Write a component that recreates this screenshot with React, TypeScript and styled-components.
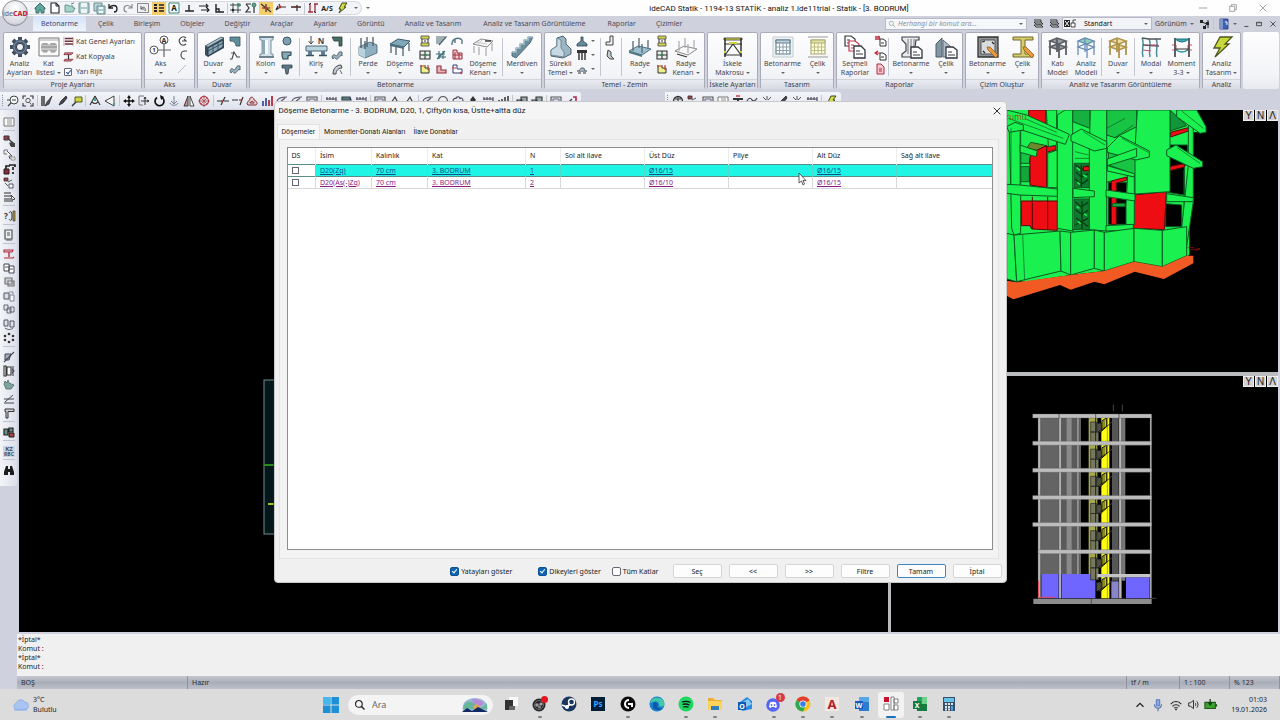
import React from "react";
import styled, { createGlobalStyle } from "styled-components";

/* ---------- icon data: [path, fill, stroke, stroke width] ---------- */
type Shape = [string, string?, string?, number?];
/* lettering inside an icon: [text, centre x, baseline, size, colour] */
type Letter = [string, number, number, number, string];

const c = (x: number, y: number, r: number) =>
  `M${x - r} ${y}a${r} ${r} 0 1 0 ${2 * r} 0a${r} ${r} 0 1 0 ${-2 * r} 0`;

const INK = "#33363f";
const STEEL = "#5f7f93";
const PALE = "#b9d3df";
const N = "none";

const page: Shape[] = [["M2 1h9l5 5v12h-14z", "#fff", INK, 1.3], ["M11 1v5h5M5 9h8M5 12h8", N, INK, 1.2]];
const docAt = (x: number, y: number, col = INK): Shape[] => [
  [`M${x} ${y}h6l4 3v7h-10z`, "#fff", col, 1.2],
  [`M${x + 2} ${y + 4}h3M${x + 2} ${y + 7}h6`, N, col, 1],
];
const frame3d = (col: string, top: string): Shape[] => [
  ["M4 6L11 3L20 6L13 9Z", top, col, 1.6],
  ["M4 12L11 9L20 12L13 15Z", top, col, 1.6],
  ["M4 6V20M13 9V23M20 6V20M11 3V17", N, col, 1.8],
];

const letters: Record<string, Letter[]> = {
  axis: [["A", 15, 8, 7, "#333"], ["1", 5, 17, 6, "#333"]],
  beam: [["N", 17, 9, 8, "#3d4a55"]],
  letterA: [["A", 6, 9, 8, "#222"]],
  as: [["A/S", 6, 9, 7, "#222"]],
  help: [["?", 3, 9, 8, "#333"]],
  kzty: [["KZ", 6, 6, 6, "#3b4f66"], ["RBC", 6, 11, 5, "#3b4f66"]],
  ps: [["Ps", 8, 11, 8, "#31a8ff"]],
  acad: [["A", 8, 12.5, 13, "#b3202c"]],
  word: [["W", 5, 11.5, 7, "#fff"]],
  excel: [["X", 5, 11.5, 7, "#fff"]],
  outlook: [["O", 5, 12.5, 7, "#fff"]],
};

const big: Record<string, Shape[]> = {
  gear: [
    ["M12 2V22M2 12H22M5 5L19 19M19 5L5 19", N, "#414d5e", 4],
    [c(12, 12, 7.5), "#4f5f73"], [c(12, 12, 6), N, "#7d91a5", 1], [c(12, 12, 3.6), "#eef2f6", "#2f3947", 1],
  ],
  list: [
    ["M2 3h20v18h-20z", "#fafafa", "#777", 1], ["M2 5h20", N, "#aaa", 1],
    ["M5 9h6v7h-6zM13 9h6v7h-6zM7 8v10M9 8v10M15 8v10M17 8v10M4 12h16", N, "#777", 0.8],
  ],
  axis: [
    ["M15 9V22M8 15H22", N, "#666", 1.2], [c(15, 5, 4), "#fff", "#444", 0.9], [c(5, 15, 4), "#fff", "#444", 0.9],
  ],
  wall: [
    ["M3 11L19 2L22 3V13L6 22L3 20Z", "#3c4f5e"], ["M6 13L21 5V12L6 21Z", "#89a6b5", "#2d3c48", 1],
    ["M6 16L21 8M11 10V18M16 8V15", N, "#3c5363", 1], ["M3 11L19 2L22 3L6 12Z", "#a9c3d0", "#33444f", 0.6],
  ],
  column: [
    ["M6 2h13v3h-2v14h2v3h-13v-3h2V5h-2z", "#cfe0e8", "#7b909d", 1], ["M8 5h3v14h-3z", "#8fa6b3"], ["M11 5h3v14h-3z", "#f6fafc"],
    ["M5 2h15M5 22h15", N, "#5c707e", 1.4],
  ],
  beam: [
    ["M2 11h21v5h-21z", PALE, "#4f6878", 1], ["M4 16h4v4h-4zM17 16h4v4h-4z", STEEL], ["M2 20.500h8M15 20.500h8", N, "#3d5363", 1.5],
    ["M7 1V9M7 9l-2.500-3M7 9l2.500-3", N, "#444", 1],
  ],
  shear: [
    ["M3 12L14 7L21 10V18L9 23L3 20Z", "#8fb0c0", "#47606e", 0.8], ["M3 12L9 14V23L3 20Z", "#b8d2de"],
    ["M5 3V13M11 2V12M17 2V11M9 6V14", N, "#4b5b66", 1.3],
  ],
  slab: [
    ["M2 9L10 4L22 6L16 12Z", "#7fa9b9", "#3f5b69", 1], ["M2 9L16 12V14L2 11Z", "#4e7080"],
    ["M3 11V18M8 12V20M15 13V21M21 8V16", N, "#5d6c76", 1.4],
  ],
  slabEdge: [
    ["M2 9L10 4L22 6L16 12Z", "#f8f8f8", "#888", 1], ["M4 7l12 2M12 4l-6 6", N, "#bbb", 0.8],
    ["M3 11V18M8 12V20M15 13V21M21 8V16", N, "#aaa", 1.2], ["M14 6h6", N, "#333", 1.4],
  ],
  stairs: [
    ["M2 21L2 17H6V13H10V9H14V5H18V2H23L20 8L6 23Z", "#6c8f9e", "#3e5865", 0.8],
    ["M2 17H6V13H10V9H14V5H18V2H23", N, "#a9c5d1", 1.5],
  ],
  strip: [
    ["M8 3L14 1L17 4V9L22 14V19L14 23L2 21V15L8 11Z", "#9db6c3", "#4d626f", 1],
    ["M8 3L12 5V13L15 17V22L2 20V15L8 11Z", "#c7dae3", "#5d7482", 0.7],
  ],
  raft: [
    ["M1 16L10 11L23 14L14 20Z", "#9cc0d0", "#4f7282", 1], ["M1 16L14 20V22L1 18Z", "#547787"],
    ["M5 6V16M11 3V13M14 9V18M20 5V14", N, "#566a76", 1.3],
  ],
  raftEdge: [
    ["M1 16L10 11L23 14L14 20Z", "#f8f8f8", "#888", 1], ["M5 6V16M11 3V13M14 9V18M20 5V14", N, "#aaa", 1.2], ["M3 19l10 3", N, "#333", 1.2],
  ],
  scaffold: [
    ["M3 3h18v2h-18z", "#dfe04a", "#333", 0.8], ["M3 9h18M3 20h18", N, "#333", 1.2], ["M4 3V22M20 3V22", N, "#333", 1.5],
    ["M4 20L12 9L20 20", N, "#333", 1.2], ["M3 17h2M19 17h2M8 8h8", N, "#cfd33a", 2],
  ],
  calc: [
    ["M2 2h20v20h-20z", "#eef1f4", "#c3ccd3", 1], ["M5 5h14v14h-14z", "#fff", "#5e7a88", 1.1], ["M5 5h14v3h-14z", "#bed3dd", "#5e7a88", 1],
    ["M5 12h14M5 15.500h14M8.500 8v11M12 8v11M15.500 8v11", N, "#8aa2ae", 1],
  ],
  calcSteel: [
    ["M2 2h20M2 22h20", N, "#999", 1], ["M5 5h14v14h-14z", "#fdfde0", "#a9a972", 1.1], ["M5 5h14v3h-14z", "#e3e3a2", "#a9a972", 1],
    ["M5 12h14M5 15.500h14M8.500 8v11M12 8v11M15.500 8v11", N, "#bdbd82", 1],
  ],
  reports: [...docAt(2, 1), ...docAt(6, 6, "#c8354f"), ["M11 11h7l4 4v8h-11z", "#fff", INK, 1.3], ["M13 16h4M13 19h7", N, INK, 1]],
  colReport: [
    ["M3 2h17v3h-3l-1 7v7h4v3h-17v-3l4-3V9L3 5z", "#e8ebee", "#3c434a", 1.2], ["M9 4v15M12 4v15M15 4v8", N, "#777", 1],
    ["M12 12h7l4 3v8h-11z", "#fff", INK, 1.3], ["M14 17h4M14 20h7", N, INK, 1],
  ],
  steelReport: [
    ["M2 22V9L8 3V22Z", "#8395a2", "#4d5c67", 1], ["M9 22V5L16 11V22Z", "#aebdc7", "#5b6b76", 1],
    ["M12 12h7l4 3v8h-11z", "#fff", INK, 1.3], ["M14 17h4M14 20h7", N, INK, 1],
  ],
  drawConc: [
    ["M2 2h20v20h-20z", "#8e9296", "#333", 1.3], ["M5 5h14v14h-14z", "#d9dcde", "#555", 1], ["M6 7l3-1M16 7l2 2M7 16l2 2", N, "#222", 1.2],
    ["M11 12L14 12L22 20L20 23L12 15Z", "#e79b3c", "#8b5512", 0.7],
  ],
  drawSteel: [
    ["M2 2h20v3h-8v14h8v3h-20v-3h8V5h-8z", "#d8cd6c", "#6f6828", 1], ["M12 12L15 12L23 20L21 23L13 15Z", "#e79b3c", "#8b5512", 0.7],
  ],
  solid: frame3d("#5b5f65", "#9a9fa5"),
  model: [["M4 6L11 3L20 6L13 9Z", "#8ed0c0", "#5b87a8", 1.2], ["M4 12L11 9L20 12L13 15Z", N, "#5b87a8", 1.2], ["M4 6V20M13 9V23M20 6V20M11 3V17", N, "#6a8cbc", 1.3]],
  wallFrame: frame3d("#b1944c", "#f0dfa4"),
  modal: [
    ["M3 3C6 8 2 14 4 22M10 4C13 9 9 15 11 22M17 4C20 9 16 15 18 22", N, "#4a8f9a", 1.5],
    ["M3 3L10 4L22 4M4 10L20 11", N, "#4f555c", 1.4], ["M4 15l8 1M11 10h8", N, "#d0506e", 1.2],
  ],
  moment: [
    ["M5 3V22M19 3V22", N, "#383c44", 1.6], ["M5 4H19Q12 10 5 4Z", "#3fb0b8", "#1d6d77", 1], ["M5 14Q12 20 19 14", N, "#2a98a4", 1.5],
    ["M2 10h4v5h-4M22 10h-4v5h4", N, "#b03a4a", 0.8], ["M5 14h14", N, "#333", 1],
  ],
  bolt: [["M10 2H22L15 9H19L5 22L10 13H4Z", "#c9d93b", "#4c5420", 1.3]],
};

const small: Record<string, Shape[]> = {
  home: [["M1 6L6 1L11 6V7H10V11H7V8H5V11H2V7H1Z", "#62a79c", "#2d6863", 0.9]],
  newDoc: [["M2 1h5l3 3v7h-8z", "#fff", "#222", 1.1], ["M7 1v3h3", N, "#222", 1]],
  open: [["M1 10V3h3l1 1h4v2h2l-2 4z", "#a5d3c6", "#68998f", 1], ["M7 2l3-1", N, "#48857c", 1]],
  save: [["M1 1h10v10h-10z", "#a9c8ca", "#6a9196", 1], ["M3 1h6v4h-6zM3 7h6v4h-6z", "#eef6f5"]],
  saveAll: [["M1 1h8v8h-8z", "#bcd2d5", "#6a9196", 1], ["M4 4h8v8h-8z", "#a9c8ca", "#6a9196", 1], ["M6 5h4v2h-4zM6 9h4v2h-4z", "#f2f8f8"]],
  undo: [["M2 2V6H6M2 6C4 3 10 2 10 7C10 9 9 10 7 10", N, "#222", 1.3]],
  redo: [["M10 2V6H6M10 6C8 3 2 2 2 7C2 9 3 10 5 10", N, "#888", 1.2]],
  undoBox: [["M0.500 1.500h11v9h-11z", "#eee", "#888", 1], ["M4 4V7H7M4 7C6 4 9 5 8 9", N, "#555", 1]],
  tree: [["M1 2h3v2h-3zM1 5h3v2h-3zM1 8h3v2h-3z", "#222"], ["M6 3h5M6 6h5M6 9h5", N, "#222", 1.4]],
  letterA: [["M1 1h10v10h-10z", "#f6fbf8", "#3f8372", 1]],
  perp: [["M6 3V9M2 9H11", N, "#222", 1.4]],
  parallel: [["M1 4H9M3 8H11M8 2l2 2l-2 2M9 6l2 2l-2 2", N, "#222", 1.1]],
  corner: [["M3 2V10H11M3 7h3v3", N, "#222", 1.4]],
  gridPts: [["M3 1V11M8 1V11M0 3H11M0 8H11", N, "#3a4a45", 1], [c(9, 3, 1.8), "#3f8f6d"], [c(3, 8, 1.2), "#222"]],
  sigma: [["M1 2H6M1 2L4 6L1 10H6M9 5V11", N, "#333", 1.2], [c(9, 3, 2), "#5aa58a", "#27624c", 0.7]],
  snap: [["M1 2L11 10M6 2V10M2 6H10", N, "#333", 1.2], [c(6, 6, 1.6), "#c33"]],
  axisX: [["M1 8L5 5H11M5 5L4 2M1 8l2-4", N, "#333", 1.2], [c(5, 5, 1.4), "#b33"]],
  axisY: [["M1 5H11M7 3V9", N, "#333", 1.3], ["M3 5H6", N, "#a33", 1.6]],
  dims: [["M3 1V10M8 2V11M1 10H6M7 2h4", N, "#a02a3c", 1.3], ["M2 3l2-2M7 9l2 2", N, "#333", 1]],
  as: [],
  flash: [["M6 1H11L8 5H10L3 11L5 7H3Z", "#d5df3a", "#3d451c", 1]],
  floors: [["M2 2h9v1.500h-9zM2 5h9v1.500h-9zM2 8h9v1.500h-9z", "#6a3340"], ["M1 1v10M11 1v10", N, "#b66", 0.6]],
  copyFloor: [["M2 2h9l-2 2h-8zM2 9h9l-2 2h-8z", "#d7818b", "#7a2733", 0.8], ["M6 4V9", N, "#333", 1.3]],
  arcUp: [["M10 3A4 4 0 1 0 10 9M6 6h4l-2-2", N, "#444", 1.1]],
  arcC: [["M9 2A4 4 0 1 0 9 10M9 2h2", N, "#444", 1.1]],
  dash: [["M2 10L10 2", N, "#bbb", 1]],
  wallArc: [["M1 2h10v9h-4c0-3-2-5-6-5z", "#5e8e9c", "#33525e", 0.8]],
  poly: [["M1 10H3L5 3L8 8H11", N, "#444", 1.1], ["M2 4h3", N, "#444", 0.8]],
  wave: [["M1 8C3 2 5 10 7 5C8 2 10 3 11 3V7C9 5 8 10 6 10C4 11 4 6 2 10Z", "#9ab4c0", "#3b4f5a", 0.8]],
  circle: [[c(6, 6, 4), "#7fa0b2", "#3b5564", 1]],
  blob: [["M1 3h9v3l-3 1v3h-5l-1-3z", "#86a9b7", "#2e4653", 1.1]],
  tee: [["M1 2h10v3h-3l-1 6h-2l-1-6h-3z", "#5c7888", "#33444f", 0.8]],
  angle: [["M1 2h10v9h-3V6h-5z", "#486c62", "#2b3f3c", 0.8]],
  arcBeam: [["M2 11C2 5 6 2 10 2L11 5C8 5 5 7 5 11Z", "#c2cbd0", "#444", 1], ["M9 7l2 4", N, "#444", 0.8]],
  yellowI: [["M2 1h8v3h-8zM2 8h8v3h-8z", "#d6d84a", "#555", 0.9], ["M3 4v4M9 4v4M5 6h2", N, "#333", 1]],
  window: [["M1 2h10v8h-10zM6 2v8M1 6h10", "#e8f0ea", "#333", 1.1], ["M4 6h4", N, "#3b8e55", 1.2]],
  yellowL: [["M2 2V10H10V5H6V2", "#eef08a", "#333", 1], ["M1 3h4M9 2v5", N, "#cc3b3b", 1.2]],
  hatch: [["M1 2h10L4 10M1 4h8M1 6h6M1 8h5", N, "#48656c", 1.2]],
  hash: [["M2 10L10 2M1 5h9M3 8h8M4 2v8M8 2v8", N, "#376a72", 1.1]],
  redL: [["M2 3V10H11V7H6V3Z", "#e8b4b8", "#8c2b38", 1.1]],
  arcTable: [["M1 8C2 3 8 2 11 5M1 8V10M4 5V8M11 5V9", N, "#567885", 1.4]],
  redGrid: [["M2 1V10H11V4H6V1ZM4 3V10M8 4V10M2 6H11", "#f0d2d4", "#a12a3c", 1]],
  plainL: [["M2 2V10H11V6H6V2Z", "#fff", "#333a7a", 1], ["M1 5h4M9 9l2 2", N, "#c33", 1.2]],
  foot: [["M5 2h2v4l4 3v2h-10V9l4-3z", "#63899a", "#2e4553", 0.8]],
  piles: [["M1 1h10v3h-10z", "#333"], ["M3 4v7M6 4v7M9 4v7", N, "#444", 1.6]],
  ties: [["M1 8h10M2 10h3M7 10h3", N, "#333", 1.2], ["M3 8L5 5H8L9 8", "#9bb3bf", "#4d6270", 0.8]],
  lShape: [["M6 1h3v9h-7V7h4z", "#eee", "#444", 1]],
  hook: [["M4 1l3 2v4l3 3h-4l-3-3z", "#c3ced4", "#444", 1]],
  rep1: [["M1 2h5M1 4h5M4 1l2 2", N, "#c22a3f", 1.4], ["M6 4h3l3 2v5h-6z", "#fff", "#333", 1], ["M7 8h3", N, "#333", 1]],
  rep2: [["M1 4h5M4 2l-3 2l3 2", N, "#c22a3f", 1.2], ["M6 4h3l3 2v5h-6z", "#fff", "#333", 1], ["M7 8h3", N, "#333", 1]],
  rep3: [["M3 1h4l3 3v7h-7z", "#f5c7cd", "#b02a40", 1], ["M5 6h3M5 8h3", N, "#b02a40", 1]],
  zoomWin: [[c(7, 5, 4), "#f4f7f8", "#444", 1], ["M4 8L1 11M5 5h4M0 5h3", N, "#444", 1.2]],
  zoomAll: [["M1 4V1H4M8 1H11V4M11 8V11H8M4 11H1V8", N, "#333", 1.1], [c(6, 5.5, 2.2), N, "#555", 1], ["M7.500 7.500l2 2", N, "#555", 1]],
  brush: [["M1 1v10M3 1v10", N, "#333", 1.4], ["M11 1L6 7L4 11L8 9Z", "#556", "#222", 0.7]],
  pen: [["M10 1L5 6L3 10L7 8L11 3Z", "#445", "#222", 0.8]],
  tag: [["M4 2h7v5h-7z", "#cdd545", "#555a1c", 1], ["M1 11L5 7", N, "#333", 1.5]],
  compass: [["M6 1L1 10M6 1L11 10M3 7C5 9 7 9 9 7", N, "#333", 1.1], ["M5 3h2v3h-2z", "#4ba093"]],
  arrowL: [["M1 6L10 1V11Z", "#f3f3f3", "#444", 1], [c(10, 9, 1.2), "#4ba093"]],
  move: [["M6 0L8 3H4ZM6 12L8 9H4ZM0 6L3 4V8ZM12 6L9 4V8Z", "#111"], ["M6 2V10M2 6H10", N, "#111", 1.4]],
  moveCopy: [["M1 1h5M1 1v9h4", N, "#777", 1], ["M7 2V10M3 6H11M7 2l-1 2M7 2l1 2M11 6l-2-1M11 6l-2 1", N, "#333", 1]],
  rotate: [["M8 2A4.500 4.500 0 1 1 4 2.500", N, "#111", 1.7], ["M7 0L11 2L8 5Z", "#111"]],
  anchor: [["M6 1V9M3 6L6 9L9 6M2 8C3 11 9 11 10 8", N, "#7c8494", 1]],
  mirror: [["M5 1V11H1Z", "#c98b90", "#333", 0.9], ["M7 1V11H11Z", "#fff", "#333", 0.9]],
  target: [[c(6, 6, 4.5), "#f7dada", "#b03040", 1.1], ["M6 0V12M0 6H12M3 3l6 6M9 3L3 9", N, "#8d4a55", 0.7]],
  trim: [["M0 6H5M7 6H12M4 10L8 2", N, "#333", 1.2], [c(5, 6, 1), "#b33"]],
  extend: [["M0 5H6M8 10L11 2", N, "#333", 1.2], ["M7 5h3", N, "#b33", 1.3]],
  offset: [["M1 9C1 6 4 6 4 3C6 1 8 3 8 5C11 6 12 9 10 10H2Z", "#e6c8cc", "#7c3540", 1], ["M4 8C4 6 8 6 8 8Z", N, "#7c3540", 1]],
  bars: [["M2 11V6M5 11V3", N, "#3b55a5", 1.8], ["M8 11V5M11 11V1", N, "#b02a3c", 1.8]],
  curve: [["M1 6C2 3 5 2 11 2M3 8L9 3", N, "#556", 1.1]],
  box: [["M1 2h10v9h-10z", "#dfe6e8", "#555", 1.1], ["M3 4h6v4h-6z", N, "#668", 1]],
  dots: [["M1 4h10M2 2v3M5 2v3M8 2v3M11 2v4", N, "#445", 1.1]],
  block: [["M2 2h8l1 3h-9z", "#5f7f88", "#2d3f46", 1.2]],
  wedge: [["M2 8L6 2L9 8", N, "#333", 1.1]],
  ring: [[c(6, 6, 4.5), N, "#555", 1.1]],
  cloudLine: [["M1 6C1 3 4 3 4 4C4 1 8 1 8 4C9 2 11 3 11 6", N, "#445", 1.1]],
  tip: [["M3 5L6 1L9 5L6 8Z", "#333"]],
  chart: [["M2 8V5M5 8V4M8 8V2M11 8V1", N, "#333", 1.5]],
  panels: [["M1 5h5v6h-5zM5 2h6v8h-6z", "#9aa7ad", "#333", 1.1]],
  redTick: [["M2 9h4M9 2h3v6", N, "#b02a50", 1.6], ["M5 7l3-3", N, "#335", 1.2]],
  globe: [[c(6, 6, 4.5), "#dfe3e6", "#333", 1.3], ["M3 4h6M6 2v8", N, "#333", 1]],
  spark: [["M6 1V5M2 2L5 5M10 2L7 5M2 7h8", N, "#556", 1]],
  tilde: [["M1 6C3 2 5 3 6 5C8 7 10 5 11 3", N, "#445", 1.2]],
  flag: [["M1 3h10v2h-10zM5 5h2v6h-2z", "#333"], ["M4 1h4", N, "#b33", 1.4]],
  listBox: [["M1 2h10v8h-10z", "#fafafa", "#777", 1], ["M4 4h5M4 6h5M4 8h5", N, "#888", 0.9]],
  selRed: [["M1 1h5v4h-5z", "#a4434f", "#333", 1], ["M4 3L10 8L7 8L8 11", "#fff", "#333", 1.2], ["M8 8h4v4h-4z", "#444"]],
  selGray: [["M1 1h4M1 1v4M1 5h3", N, "#777", 1], ["M4 2L9 7L6 7L7 10", "#fff", "#555", 1], ["M8 8h4v3h-4z", "#e5e5e5", "#888", 0.8]],
  lock: [["M1 6h5v5h-5z", "#8d2c38", "#222", 1], ["M3 6V3h4M6 2h6v2M10 4v3M10 9v2", N, "#222", 1.7]],
  pins: [["M1 1h4v3h-4z", "#a4434f", "#333", 0.8], ["M5 5l4-2M6 7h4v4h-4zM2 6l3 3", "#fff", "#556", 1]],
  tableSel: [["M1 2h7M1 5h7M1 8h7M1 10h9", N, "#333", 1.2], ["M8 4L12 8L9 9Z", "#fff", "#333", 0.9]],
  help: [["M6 3C8 0 9 2 9 6C9 10 8 12 6 9", N, "#333", 1], ["M10 1h2v10h-2z", "#b9a23f", "#333", 0.7]],
  sheet: [["M2 1h7v9h-7z", "#eceff1", "#555", 1.2], ["M4 4h3M4 6h3M3 11h6", N, "#555", 1]],
  plumb: [["M1 2h9l-1 2h-8zM1 10h9l1-1", "#e6c4c8", "#b0303f", 1.1], ["M6 4V9", N, "#b0303f", 1.4]],
  copy: [["M1 2h5v7h-5zM6 4h5v7h-5z", "#fff", "#445", 1], ["M2 5h3M7 7h3", N, "#445", 0.9]],
  stack: [["M2 2h7v6h-7zM5 5h6v5h-6z", "#c7ccd2", "#777", 1.2]],
  send: [["M1 3h5v6h-5z", "#d8dde3", "#556", 1], ["M7 5h4v6h-4zM6 2h4v2", "#f6f6f6", "#778", 0.9]],
  multi: [["M1 1h4v5h-4zM4 4h4v5h-4zM7 3h4v5h-4z", "#e4e8ec", "#667", 1]],
  swap: [["M1 2h4v6h-4zM7 3h4v6h-4z", "#dde2e8", "#556", 1], ["M2 10C5 12 8 12 10 10", N, "#556", 1]],
  circleDots: [[c(6, 2, 1.3), "#333"], [c(10, 4, 1.3), "#333"], [c(10, 8, 1.3), "#333"], [c(6, 10, 1.3), "#333"], [c(2, 8, 1.3), "#333"], [c(2, 4, 1.3), "#333"]],
  slashBox: [["M2 3h6l-2 6h-4z", "#9eb0b8", "#445", 1], ["M1 11L11 1", N, "#445", 1.1]],
  door: [["M1 1h2v10h-2zM4 2h4v8h-4z", "#fff", "#333", 1.1], ["M10 1v10M9 4l2 2l-2 2", N, "#445", 1.1]],
  hand: [["M1 5L2 2L4 4L5 1L6 4L11 6L8 10H3Z", "#81a39f", "#4b6b6a", 0.8]],
  slope: [["M1 6H11M1 10H11M2 9L10 2", N, "#445", 1]],
  pipe: [["M2 2h9v2.500h-6v6.500h-2v-6.500h-1z", "#d0d4d8", "#333", 1]],
  cubes: [["M1 3h4v6h-4zM6 2h4v4h-4z", "#6d8f88", "#222", 1.2], ["M6 7h5v4h-5z", "#a5453f", "#222", 1]],
  kzty: [["M0 1h12v11h-12z", "#c9d5df"]],
  binoc: [["M3 2h2v3h2V2h2l2 6v3H7V8H5v3H1V8z", "#1c1c1c"]],
  layers: [["M2 4h7l2 2h-7zM2 7h7l2 2h-7zM2 2h7v2", "#d8dadd", "#333", 1]],
  swatch: [["M0 2h6v7h-6z", "#222"], ["M1 3l4 5M5 3l-4 5", N, "#fff", 1], ["M8 5h3v4h-4v-4zM9 5V2h3", "#fff", "#333", 0.9]],
  nodes: [["M2 2h3v3h-3zM8 4h3v3h-3zM5 8h3v3h-3z", "#222"], ["M4 4l5 2l-3 3M10 2v8", N, "#222", 1]],
  book: [["M2 1h8v10h-8z", "#3c63b8", "#223a78", 0.8], ["M2 1h3v10h-3z", "#8296c8"], ["M7 4h2v3", N, "#fff", 1]],
  search: [[c(5, 5, 3.2), N, "#888", 0.9], ["M7.500 7.500L11 11", N, "#888", 1]],
  min: [["M1 6H11", N, "#888", 0.9]],
  restore: [["M2 4h6v6h-6zM4 4V2h6v6h-2", N, "#888", 0.9]],
  close: [["M2 2L10 10M10 2L2 10", N, "#888", 0.9]],
  closeDark: [["M2 2L10 10M10 2L2 10", N, "#222", 1.1]],
  restoreSm: [["M3 4h6v4h-6zM3 4.500h6", N, "#555", 1.2]],
  closeSm: [["M3 3L9 9M9 3L3 9", N, "#555", 1.2]],
  minSm: [["M4 9H9", N, "#555", 1.3]],
};

const task: Record<string, Shape[]> = {
  start: [["M0 0h7.500v7.500h-7.500zM8.500 0h7.500v7.500h-7.500zM0 8.500h7.500v7.500h-7.500zM8.500 8.500h7.500v7.500h-7.500z", "#1d8fd6"], ["M0 0h7.500v7.500h-7.500z", "#47b8ec"]],
  desk: [["M6 1h9v9h-9z", "#fafafa"], ["M2 4h8v10h-8z", "#333"], ["M6 10h6v4h-6z", "#666"]],
  obs: [[c(7, 9, 6.5), "#26282b"], [c(7, 9, 4.5), N, "#777", 0.8], [c(5, 9, 1.8), "#9a9a9a"], [c(9, 8, 1.6), "#aaa"], [c(7.5, 11, 1.6), "#888"], [c(12.5, 3.5, 3.5), "#e2161c"]],
  steam: [[c(8, 8, 7.5), "#17375e"], [c(10.5, 6, 3), N, "#fff", 1.4], [c(6, 11, 2), "#fff"], ["M1 9L6 11L9 8", N, "#fff", 1.8]],
  ps: [["M1 1h14v14h-14z", "#001e36"]],
  logi: [[c(8, 8, 7.5), "#0b0b0b"], ["M9 4A4 4 0 1 0 9 12M8 8h4v3", N, "#fff", 2]],
  edge: [[c(8, 8, 7.5), "#1681cf"], ["M1 7A7.500 7.500 0 0 1 15.500 8C15 11 12 11 10 10C11 7 8 4 4 6Z", "#40c9a5"], ["M4 7C7 5 10 8 8 10C9 13 12 13 14 12A7.500 7.500 0 0 1 4 12Z", "#0c58a6"]],
  spotify: [[c(8, 8, 7.5), "#1ed760"], ["M4 6C7 5 10 5 12.500 6.500M4.500 8.500C7 7.700 9.500 8 11.500 9M5 11C7 10.300 9 10.500 10.500 11.200", N, "#10141a", 1.3]],
  folder: [["M1 2h5l2 2h7v10h-14z", "#eeb02c"], ["M1 5h14v9h-14z", "#fbd25b"], ["M4 10h8v4h-8z", "#2f7dbd"]],
  outlook: [["M3 6L10 1L15 5V13L5 15Z", "#2a8be0"], ["M6 6L11 3L15 8L9 11Z", "#86c8f2"], ["M1 6h8v8h-8z", "#0f5ab5"]],
  discord: [[c(7, 9, 6.8), "#5865f2"], ["M4 6.500C6 5.500 8 5.500 10 6.500L11 11L9 12L8.500 11H5.500L5 12L3 11Z", "#fff"], [c(5.5, 9, 0.9), "#5865f2"], [c(8.5, 9, 0.9), "#5865f2"]],
  chrome: [[c(8, 8, 7.5), "#fbc116"], ["M8 8L1.500 4.200A7.500 7.500 0 0 1 14.500 4.200Z", "#e33b2e"], ["M8 8L1.500 4.200A7.500 7.500 0 0 0 8 15.500L11 9.500Z", "#2da94f"], [c(8, 8, 3.6), "#fff"], [c(8, 8, 2.8), "#3b7ded"]],
  acad: [["M1 1h14v14h-14z", "#f4e6e0"]],
  word: [["M5 1h10v14h-10z", "#2b7cd3"], ["M5 1h10v5h-10z", "#58a6e8"], ["M1 5h8v8h-8z", "#185abd"]],
  idecad: [["M1 1h5v5h-5z", "#c8102e"], ["M1 8h5v6h-5zM8 1h3v13h-3zM11 3h4v4h-4zM11 9h4v5h-4z", "#fff", "#777", 0.9]],
  excel: [["M5 1h10v14h-10z", "#21a366"], ["M10 1h5v7h-5z", "#6fd08c"], ["M5 8h10v7h-10z", "#177a45"], ["M1 5h8v8h-8z", "#107c41"]],
  calculator: [["M2 1h12v14h-12z", "#38506a"], ["M3 2h10v4h-10z", "#63c4e8"], ["M4 7h2v2h-2zM7 7h2v2h-2zM10 7h2v2h-2zM4 10h2v2h-2zM7 10h2v2h-2zM4 12.500h2v2h-2zM7 12.500h2v2h-2z", "#dfe8ef"], ["M10 10h2v4.500h-2z", "#4aa3e0"]],
  cloud: [["M4 13A3.500 3.500 0 0 1 4 6.500A4.500 4.500 0 0 1 12 5.500A3.800 3.800 0 0 1 12.500 13Z", "#a9c4f2", "#7fa3dd", 0.6], ["M2 13H14", N, "#8db0ea", 1.2]],
  lens: [[c(6.5, 6.5, 4.5), N, "#222", 1.5], ["M10 10L14 14", N, "#222", 1.8]],
  up: [["M4 10L8 6L12 10", N, "#222", 1.4]],
  mic: [["M6 2h4v7h-4z", "#8aa8dc", "#4a6fb8", 1], ["M4 7C4 13 12 13 12 7M8 12V15", N, "#4a6fb8", 1.2]],
  wifi: [["M2 7C5 3 11 3 14 7M4 9.500C6 7 10 7 12 9.500M6 11.500C7 10.500 9 10.500 10 11.500", N, "#222", 1.2], [c(8, 13, 1), "#222"]],
  sound: [["M2 6h2l4-3v10l-4-3h-2z", N, "#222", 1.1], ["M10 6C11 7 11 9 10 10M12 4C14 6 14 10 12 12", N, "#222", 1.1]],
  battery: [["M1 5h12v7h-12z", "#39a12c", "#235a1d", 1.2], ["M13 7h2v3h-2z", "#235a1d"], ["M7 1v6M5 5l2 3l2-3", N, "#143d10", 1.4]],
};

/* ---------- icon ---------- */
const Glyph = styled.svg<{ $size: number }>`
  width: ${(p) => p.$size}px;
  height: ${(p) => p.$size}px;
  flex: none;
  display: block;
  overflow: visible;
`;

function Icon({ set, name, size, box }: { set: Record<string, Shape[]>; name: string; size: number; box: number }) {
  return (
    <Glyph $size={size} viewBox={`0 0 ${box} ${box}`} aria-hidden="true">
      {(set[name] || page).map(([d, fill = N, stroke, sw], i) => (
        <path key={i} d={d} fill={fill} stroke={stroke} strokeWidth={sw} fillRule="evenodd" />
      ))}
      {(letters[name] || []).map(([t, x, y, fs, col]) => (
        <text key={t} x={x} y={y} fontSize={fs} fontWeight="700" textAnchor="middle" fill={col}>{t}</text>
      ))}
    </Glyph>
  );
}
const Big = ({ name }: { name: string }) => <Icon set={big} name={name} size={24} box={24} />;
const Small = ({ name, size = 12 }: { name: string; size?: number }) => <Icon set={small} name={name} size={size} box={12} />;
const Task = ({ name, size = 16 }: { name: string; size?: number }) => <Icon set={task} name={name} size={size} box={16} />;

/* ---------- base ---------- */
const Global = createGlobalStyle`
  * { box-sizing: border-box; }
  body { margin: 0; background: #cfd2de; }
  body, button, input, select { font-family: "Noto Sans", "Open Sans", sans-serif; font-size: 7px; line-height: 9px; color: #3d3f4a; }
  button { border: 0; padding: 0; background: none; }
`;

const Shell = styled.div`
  position: relative;
  display: flex;
  flex-direction: column;
  min-height: 100vh;
  overflow: hidden;
`;

const Caret = styled.span`
  width: 0;
  height: 0;
  flex: none;
  border: 2px solid transparent;
  border-top-color: #666;
  border-bottom: 0;
`;

/* ---------- title bar ---------- */
const TitleBar = styled.header`
  display: flex;
  align-items: center;
  height: 16px;
  background: #fefefe;
`;
const Orb = styled.button`
  position: absolute;
  left: 2px;
  top: 0;
  width: 26px;
  height: 26px;
  border-radius: 50%;
  border: 1px solid #8b8d96;
  background: radial-gradient(circle at 50% 30%, #fff, #d9dae0 70%, #a9abb5);
  font-size: 7px;
  font-weight: 800;
  color: #c22633;
  z-index: 2;
`;
const OrbPrefix = styled.span`
  color: #666;
  font-weight: 400;
`;
const QuickBar = styled.div`
  display: flex;
  align-items: center;
  height: 14px;
  margin-left: 20px;
  padding-left: 12px;
  border: 1px solid #d6d8df;
  border-left: 0;
  border-radius: 0 7px 7px 0;
  background: #f3f4f8;
`;
const QuickWrap = styled.div`
  display: flex;
  align-items: center;
  gap: 4px;
`;
const QuickGroup = styled.div<{ $w: number }>`
  display: flex;
  justify-content: space-around;
  width: ${(p) => p.$w}px;
  margin: 0 1px;
`;
const IconButton = styled.button<{ $on?: boolean }>`
  display: grid;
  place-items: center;
  width: 14px;
  height: 13px;
  background: ${(p) => (p.$on ? "#f5cd6c" : "none")};
`;
const CaretButton = styled(IconButton)`
  width: 11px;
`;
const VRule = styled.span<{ $h?: number }>`
  width: 1px;
  height: ${(p) => p.$h || 11}px;
  flex: none;
  background: #c3c5cf;
`;
const AppTitle = styled.h1`
  flex: 1;
  margin: 0;
  padding-right: 8px;
  font-family: Roboto, "Noto Sans", sans-serif;
  font-size: 8px;
  font-weight: 400;
  color: #111;
  text-align: center;
  white-space: nowrap;
`;
const WindowButtons = styled.div`
  display: flex;
  justify-content: flex-end;
  gap: 16px;
  padding-right: 10px;
`;

/* ---------- tab strip ---------- */
const TabStrip = styled.nav`
  display: flex;
  align-items: center;
  height: 15px;
  padding: 0 2px 0 33px;
  background: #cfd1dc;
`;
const RibbonTab = styled.button<{ $on?: boolean; $wide?: boolean }>`
  height: 15px;
  padding: 0 ${(p) => (p.$on ? 8 : p.$wide ? 12 : 10)}px;
  margin-right: ${(p) => (p.$on ? 2 : 0)}px;
  border-radius: 2px 2px 0 0;
  color: ${(p) => (p.$on ? "#3a4a78" : "#4a4c58")};
  background: ${(p) => (p.$on ? "linear-gradient(#d5e3f8, #eef3fb)" : "none")};
  white-space: nowrap;
`;
const Spacer = styled.span`
  flex: 1;
`;
const SearchBox = styled.label`
  display: flex;
  align-items: center;
  gap: 2px;
  width: 142px;
  height: 12px;
  padding: 0 3px 0 2px;
  border: 1px solid #b7bac6;
  background: #f6f7fa;
  input {
    flex: 1;
    min-width: 0;
    padding: 0;
    border: 0;
    background: none;
    font-style: italic;
    outline: 0;
  }
  input::placeholder { color: #8c8f99; }
`;
const StripTools = styled.div`
  display: flex;
  align-items: center;
  gap: 4px;
  padding: 0 2px 0 5px;
`;
const StyleBox = styled.label`
  display: flex;
  align-items: center;
  gap: 2px;
  width: 90px;
  height: 13px;
  padding: 0 3px 0 1px;
  border: 1px solid #b7bac6;
  background: #f2f3f7;
  select {
    flex: 1;
    appearance: none;
    padding: 0 6px;
    border: 0;
    background: none;
    color: #111;
    outline: 0;
  }
`;
const ViewTools = styled.div`
  display: flex;
  align-items: center;
  gap: 2px;
  width: 126px;
  justify-content: space-between;
  padding-left: 3px;
`;

/* ---------- ribbon ---------- */
const Ribbon = styled.section`
  display: flex;
  gap: 2px;
  height: 60px;
  padding: 1px 1px 2px 3px;
  background: #cfd1dc;
`;
const Group = styled.div<{ $w?: number }>`
  display: flex;
  flex-direction: column;
  flex: ${(p) => (p.$w ? `0 0 ${p.$w}px` : "1 1 0")};
  min-width: 0;
  border: 1px solid #a9acb8;
  border-width: ${(p) => (p.$w ? "1px" : "0")};
  border-radius: 2px;
  background: linear-gradient(#fdfdfe, #f3f4f7 75%, #e9eaf0);
`;
const GroupBody = styled.div`
  display: flex;
  flex: 1;
  padding-top: 2px;
`;
const Caption = styled.div`
  height: 10px;
  border-top: 1px solid #d3d5de;
  background: linear-gradient(#e9eaf1, #d8dae4);
  display: flex;
  justify-content: center;
  white-space: nowrap;
  line-height: 9px;
`;
const ToolButton = styled.button<{ $w: number }>`
  display: flex;
  flex-direction: column;
  align-items: center;
  flex: 0 0 ${(p) => p.$w}px;
  min-width: 0;
  height: 44px;
  color: #44464f;
  white-space: nowrap;
  line-height: 9px;
`;
const ToolLine = styled.span`
  display: flex;
  align-items: center;
  gap: 2px;
  height: 9px;
`;
const SmallCol = styled.div<{ $w: number }>`
  display: flex;
  flex-direction: column;
  align-items: center;
  gap: 2px;
  flex: 0 0 ${(p) => p.$w}px;
  min-width: 0;
  height: 42px;
`;
const CaretCell = styled.span`
  display: grid;
  place-items: center;
  height: 12px;
`;
const Divider = styled.span<{ $w: number }>`
  flex: 0 0 ${(p) => p.$w}px;
  display: flex;
  justify-content: center;
  padding-top: 3px;
`;
const SideList = styled.div`
  display: flex;
  flex-direction: column;
  gap: 2px;
  padding-left: 1px;
`;
const SideItem = styled.button`
  display: flex;
  align-items: center;
  gap: 2px;
  height: 13px;
  white-space: nowrap;
`;
const Tick = styled.input`
  appearance: none;
  position: relative;
  width: 8px;
  height: 8px;
  margin: 0;
  flex: none;
  border: 1px solid #667;
  border-radius: 1px;
  background: #fff;
  &:checked::after {
    content: "";
    position: absolute;
    left: 2px;
    top: 0;
    width: 2px;
    height: 4px;
    border: solid #2e4a8f;
    border-width: 0 1px 1px 0;
    transform: rotate(40deg);
  }
`;
const BlueTick = styled(Tick)`
  width: 9px;
  height: 9px;
  border-radius: 2px;
  &:checked {
    background: #1164b4;
    border-color: #0d5296;
  }
  &:checked::after { border-color: #fff; }
`;
const SideCheck = styled.label`
  display: flex;
  align-items: center;
  gap: 4px;
  height: 13px;
  padding-left: 1px;
`;

function Tool({ w, icon, a, b, caret }: { w: number; icon: string; a: string; b?: string; caret?: boolean }) {
  return (
    <ToolButton $w={w}>
      <Big name={icon} />
      <ToolLine>{a}</ToolLine>
      <ToolLine>
        {b}
        {caret && <Caret />}
      </ToolLine>
    </ToolButton>
  );
}
const Col = ({ w, names }: { w: number; names: string[] }) => (
  <SmallCol $w={w}>
    {names.map((n) => (
      <button key={n} aria-label={n}><Small name={n} /></button>
    ))}
  </SmallCol>
);
const Sep = ({ w }: { w: number }) => (
  <Divider $w={w}><VRule $h={38} /></Divider>
);

/* ---------- icon toolbars ---------- */
const ToolRow = styled.div`
  display: flex;
  align-items: center;
  justify-content: flex-start;
  height: 19px;
  background: #cfd2de;
`;
const Strip = styled.div<{ $w: number; $gap?: number }>`
  display: flex;
  align-items: center;
  justify-content: space-between;
  width: ${(p) => p.$w}px;
  height: 17px;
  margin-left: ${(p) => p.$gap || 0}px;
  padding: 0 4px 0 2px;
  border-radius: 0 3px 3px 0;
  background: linear-gradient(#f4f5f9, #dfe2ec);
`;
const Grip = styled.span`
  width: 2px;
  height: 11px;
  flex: none;
  border-left: 1px dotted #888c9a;
`;

/* ---------- workspace ---------- */
const Work = styled.main`
  display: flex;
  flex: 1;
  min-height: 0;
  padding-right: 2px;
`;
const SideDock = styled.aside`
  width: 19px;
  flex: none;
`;
const SideBar = styled.div`
  display: flex;
  flex-direction: column;
  align-items: center;
  gap: 2px;
  width: 17px;
  height: 376px;
  padding: 4px 0 0 1px;
  border-radius: 0 0 3px 0;
  background: linear-gradient(90deg, #f4f5f9, #dcdfea);
`;
const SideGroup = styled.div`
  display: flex;
  flex-direction: column;
  gap: 2px;
  padding: 2px 0;
  border-bottom: 1px solid #bfc2cf;
  &:last-child { border-bottom: 0; }
`;
const Plan = styled.div`
  display: flex;
  flex: 1;
  min-width: 0;
  background: #000;
  overflow: hidden;
`;
const Views = styled.div`
  display: grid;
  grid-template-rows: 262px 1fr;
  gap: 4px;
  flex: 0 0 390px;
  padding-left: 3px;
  background: #b9bbbf;
`;
const View = styled.div`
  position: relative;
  display: flex;
  min-height: 0;
  background: #000;
  overflow: hidden;
`;
const Scene = styled.svg<{ $w: number; $h: number }>`
  width: ${(p) => p.$w}px;
  height: ${(p) => p.$h}px;
  flex: none;
  display: block;
`;
const ViewKeys = styled.div`
  position: absolute;
  right: 0;
  top: 0;
  display: flex;
  gap: 1px;
`;
const ViewKey = styled.button`
  display: grid;
  place-items: center;
  width: 11px;
  height: 11px;
  border: 1px solid #eee;
  background: #d2d2d2;
  color: #222;
  font-family: "Liberation Sans", sans-serif;
  font-size: 10px;
  line-height: 9px;
`;
const Keys = () => (
  <ViewKeys>
    {["Y", "N", "Λ"].map((k) => <ViewKey key={k}>{k}</ViewKey>)}
  </ViewKeys>
);

const G = "#1af04f";
const L = "#0b5a20";
const D = "#12a83c";

function Building() {
  return (
    <Scene $w={387} $h={262} viewBox="-327 45 1161 786">
      <g stroke={L} strokeWidth="3" fill={G}>
        <path d="M-60 45H590L618 98V115H580V318H568V480L487 515L402 500L313 528L212 540L75 560L-60 540Z" stroke="none" />
        {/* openings onto the black background */}
        <path d="M500 150H562V208L525 225L500 215Z" fill="#000" />
        <path d="M503 228L553 215V300L503 292Z" fill="#000" />
        <path d="M497 326L545 330V395H497Z" fill="#000" />
        <path d="M580 112H620V165L580 150ZM568 222H612V480H572Z" fill="#000" stroke="none" />
        <path d="M552 225V395" />
        <path d="M325 262H380V388H325Z" fill="#000" />
        {/* stair core seen through the frame */}
        <path d="M222 205H268V278H222ZM222 312H268V404H222Z" fill="#0f7a2e" />
        <path d="M226 210l20 14l18-12M228 232l16 14l20-10M226 252l18 16l20-14M244 210v66M226 320l18 16l20-14M226 344l20 14l18-12M228 368l16 12l20-10M226 390l18-10l20 14M246 318v84" fill="none" stroke="#063d15" strokeWidth="4" />
        <path d="M230 218l10 8M250 240l10 6M232 262l8 6M230 334l8 6M252 356l8 6M234 380l8 6" fill="none" stroke={G} strokeWidth="5" />
        {/* shaded soffits */}
        <path d="M62 215H88V260H62Z" fill={D} />
        <path d="M320 45H410V95L345 128L320 120Z" fill="#18c444" />
        <path d="M325 160L410 190V240L325 210Z" fill="#18c444" />
        <path d="M218 45H270V100L218 80Z" fill="#15b03f" />
        <path d="M510 45L560 92L510 108Z" fill="#11963a" />
        <path d="M62 168H95L88 205H62Z" fill="#18c444" />
        <path d="M92 142L140 152L112 166L80 160Z" fill="#6c8a2c" />
        {/* red walls */}
        <g fill="#ee0d12" stroke="#5a0508">
          <path d="M86 45H138V98L86 80Z" />
          <path d="M90 185L112 165L140 152V278L90 270Z" />
          <path d="M140 155L168 152V164L140 172Z" />
          <path d="M64 318H172V406L95 402L90 392H64Z" />
          <path d="M97 305V402M143 305V404" />
          <path d="M400 300L499 290L493 404L400 400Z" />
          <path d="M512 112L565 98V108L512 126ZM506 215L553 206V216L506 228Z" />
          <path d="M334 258L380 246V256L349 264V388H334Z" />
          <path d="M250 215h18v12h-18z" />
        </g>
        <path d="M318 262L334 258M338 325H375V335H338Z" fill={D} />
        {/* columns */}
        <path d="M28 100L62 90V415L42 420L35 400Z" />
        <path d="M139 45H170V150L145 155Z" />
        <path d="M143 175L172 165V278H143Z" />
        <path d="M172 60L195 45H218V408L172 400Z" />
        <path d="M271 45H320V408L268 404V160Z" />
        <path d="M383 240L403 245V390L378 388V330Z" />
        <path d="M412 45H510V290L405 297V160Z" />
        <path d="M565 60H580V320L556 480L545 400L565 210Z" />
        {/* beams and cantilevers */}
        <path d="M20 45L80 60L208 118L196 148L75 108L20 95Z" />
        <path d="M20 95L45 82L70 90V105L28 112Z" />
        <path d="M60 150L112 168L108 185L60 172Z" />
        <path d="M213 120L244 102L320 140V160L283 168L213 138Z" />
        <path d="M322 158L358 122L448 168V186L408 195L322 172Z" />
        <path d="M322 192L410 160V185L322 212Z" />
        <path d="M322 212L403 236V246L322 228Z" />
        <path d="M20 268L60 270L172 282V304L60 300L20 295Z" />
        <path d="M219 280L283 288V305L219 308ZM318 285L405 297V318L318 305Z" />
        <path d="M500 165L528 150L608 200V215L580 220L500 182Z" />
        <path d="M530 45H590L618 95V112L600 115L530 65Z" />
        <path d="M500 296L580 308V320H500Z" />
        <path d="M318 392L400 388V405L318 408ZM219 404H270V412H219Z" />
        {/* basement walls */}
        <path d="M20 415L42 420L50 560L20 552Z" />
        <path d="M42 420L180 408L183 528L50 560Z" />
        <path d="M180 408L212 412V540L183 528Z" />
        <path d="M212 412L283 405V520L212 540Z" />
        <path d="M283 405L313 412V528L283 520Z" />
        <path d="M313 412L402 400V500L313 528Z" />
        <path d="M402 400L487 406V515L402 500Z" />
        <path d="M487 406L560 395V482L487 515Z" />
        <path d="M68 418L74 556M60 110V270M33 100V268M78 72L170 112M25 70L190 130M250 110L315 150M366 130L445 172M532 158L600 205M545 48L610 100M375 70L320 100M400 90L345 128M225 170L265 180M225 190h42" fill="none" strokeWidth="2" />
      </g>
      <path d="M-60 545L50 562L212 540L313 528L402 500L487 515L560 482H580V505L492 552L404 530L313 568L283 560L212 584L180 570L40 613L-60 560Z" fill="#f15a22" />
      <path d="M562 458h20M572 464l28-3l-12 6" stroke="#b01818" strokeWidth="2" fill="none" />
      <text x="18" y="76" fontSize="24" fill="#8c5a1a">rumu</text>
    </Scene>
  );
}

const floors = [0, 1, 2, 3, 4, 5];

function Elevation() {
  return (
    <Scene $w={387} $h={255} viewBox="-387 18 1161 765">
      <path d="M62 140H118V612H62Z" fill="#646464" />
      <path d="M124 140H172V612H124Z" fill="#5a5a5a" />
      <path d="M140 140H155V612H140Z" fill="#8a8a8a" />
      <path d="M180 140V612" stroke="#bbb" strokeWidth="3" />
      <path d="M206 140H232V612H206Z" fill="#a7a94d" />
      <path d="M244 140H268V685H244Z" fill="#ffff14" />
      <path d="M262 140V685" stroke="#7d7d10" strokeWidth="2" />
      <path d="M276 140H296V632H276Z" fill="#565656" />
      <path d="M305 140H316V632H305Z" fill="#777" />
      <path d="M64 612H116V685H64ZM126 612H228V685H126ZM318 622H389V685H318Z" fill="#6f66ff" />
      <path d="M274 634H296V685H274Z" fill="#8a85c9" />
      {[...floors, 6].map((i) => {
        const y = 140 + i * 81.5 - (i === 6 ? 12 : 0);
        return (
          <g key={i} stroke="#222" strokeWidth="2">
            {i < 6 && <path d={`M212 ${y + 16}h18v30h-18zM212 ${y + 46}h24v36h-24z`} fill="#77795e" />}
            <path d={`M230 ${y + 20}h14v26h-14z`} fill="#4e4f40" />
            <path d={`M246 ${y + 12}l14-8v26l-14 12z`} fill="#c9c916" stroke="#111" strokeWidth="3" />
            <path d={`M252 ${y + 8}v28M234 ${y + 46}L276 ${y + 18}`} fill="none" stroke="#111" strokeWidth="2" />
            <path d={`M268 ${y + 22}l12-10h14`} fill="none" stroke="#555" />
          </g>
        );
      })}
      <path d="M54 140H62V685H54ZM117 140H124V685H117ZM297 140H305V685H297ZM390 140H395V685H390Z" fill="#b9b9b9" stroke="#444" strokeWidth="1" />
      <path d="M172 140h4v472h-4z" fill="#ccc" />
      <path d="M227 132V685" stroke="#222" strokeWidth="3" />
      {floors.map((i) => (
        <path key={i} d={`M${i === 5 ? 54 : 38} ${132 + i * 81.4}H395v12H${i === 5 ? 54 : 38}z`} fill="#bdbdbd" stroke="#555" strokeWidth="1" />
      ))}
      <path d="M232 612H390V622H232Z" fill="#c4c4c4" />
      <path d="M40 686H395V702H40Z" fill="#8c8c8c" />
      <path d="M214 686v16M117 132v12M227 132v12M297 132v12" stroke="#333" strokeWidth="2" />
      <path d="M280 104v20M307 104v20M395 685h14" stroke="#666" strokeWidth="2" />
      <path d="M56 632V682H104" fill="none" stroke="#e8474c" strokeWidth="3" />
    </Scene>
  );
}

function PlanFragment() {
  return (
    <Scene $w={869} $h={521} viewBox="0 0 869 521">
      <rect x="245" y="270" width="60" height="154" fill="#06171a" stroke="#6f8d90" />
      <path d="M245 355h20" stroke="#2a8a1f" strokeWidth="2" />
      <path d="M249 394h6" stroke="#a8c424" strokeWidth="2" />
      <path d="M255 270v154" stroke="#0c2a2c" />
    </Scene>
  );
}

/* ---------- dialog ---------- */
const DialogLayer = styled.div`
  position: absolute;
  inset: 101px 0 auto 0;
  display: flex;
  justify-content: center;
`;
const Dialog = styled.section`
  display: flex;
  flex-direction: column;
  width: 733px;
  height: 482px;
  border: 1px solid #c9c9cc;
  border-radius: 4px;
  background: #f0f0f0;
  color: #1b1b1b;
`;
const DialogHead = styled.div`
  display: flex;
  align-items: center;
  justify-content: space-between;
  height: 17px;
  padding: 0 4px;
  border-radius: 4px 4px 0 0;
  background: #f5f5f5;
`;
const DialogTitle = styled.h2`
  margin: 0;
  font-family: Roboto, "Noto Sans", sans-serif;
  font-size: 8px;
  font-weight: 400;
  color: #1b1b1b;
`;
const DialogTabs = styled.div`
  display: flex;
  align-items: flex-end;
  height: 20px;
  padding-left: 2px;
`;
const DialogTab = styled.button<{ $on?: boolean }>`
  height: ${(p) => (p.$on ? 15 : 13)}px;
  padding: 0 4px;
  font-family: Roboto, "Noto Sans", sans-serif;
  color: #1b1b1b;
  border: ${(p) => (p.$on ? "1px solid #e2e2e2" : "0")};
  border-bottom: 0;
  background: ${(p) => (p.$on ? "#f8f8f8" : "none")};
`;
const Sheet = styled.div`
  flex: 1;
  margin: 0 7px 0 4px;
  padding: 7px 5px 8px 7px;
  border: 1px solid #e4e4e4;
  background: #f3f3f3;
`;
const GridFrame = styled.div`
  height: 100%;
  border: 1px solid #8d8d8d;
  background: #fff;
  overflow: hidden;
`;
const Grid = styled.table`
  width: 100%;
  table-layout: fixed;
  border-collapse: collapse;
  color: #1b1b1b;
  th, td {
    padding: 0 4px;
    text-align: left;
    font-weight: 400;
    white-space: nowrap;
    border-right: 1px solid #d8d8d8;
  }
  th:last-child, td:last-child { border-right: 0; }
  th { height: 16px; border-color: #ececec; }
`;
const Row = styled.tr<{ $on?: boolean }>`
  height: 12px;
  background: ${(p) => (p.$on ? "#1ff5e4" : "#fff")};
  border: solid ${(p) => (p.$on ? "#5a8d8a" : "#d8d8d8")};
  border-width: 1px 0;
  td:first-child { background: #fff; }
  td { border-color: ${(p) => (p.$on ? "#4fd8cc" : "#d8d8d8")}; }
  a { color: ${(p) => (p.$on ? "#14508f" : "#8a1c84")}; }
`;
const RowTick = styled(Tick)`
  display: block;
  width: 7px;
  height: 7px;
  border-radius: 0;
`;
const Foot = styled.div`
  display: flex;
  align-items: center;
  justify-content: flex-end;
  height: 23px;
  padding: 1px 4px 0 0;
`;
const FootCheck = styled.label<{ $gap: number }>`
  display: flex;
  align-items: center;
  gap: 2px;
  margin-right: ${(p) => p.$gap}px;
  white-space: nowrap;
`;
const FootButtons = styled.div`
  display: flex;
  gap: 7px;
`;
const PushButton = styled.button<{ $primary?: boolean }>`
  width: 49px;
  height: 14px;
  border: 1px solid ${(p) => (p.$primary ? "#3f86c4" : "#d5d5d5")};
  border-radius: 2px;
  background: #fdfdfd;
  color: #1b1b1b;
`;
const Pointer = styled.svg`
  position: absolute;
  left: 798px;
  top: 172px;
  width: 9px;
  height: 14px;
`;

const columns: [string, number?][] = [
  ["DS", 28], ["İsim", 56], ["Kalınlık", 56], ["Kat", 98], ["N", 35], ["Sol alt ilave", 84],
  ["Üst Düz", 84], ["Pilye", 84], ["Alt Düz", 84], ["Sağ alt ilave"],
];
const rows = [
  ["D20(Zq)", "70 cm", "3. BODRUM", "1", "", "Ø16/15", "", "Ø16/15", ""],
  ["D20(As(-)Zq)", "70 cm", "3. BODRUM", "2", "", "Ø16/10", "", "Ø16/15", ""],
];

function SlabDialog() {
  return (
    <DialogLayer>
      <Dialog role="dialog" aria-labelledby="dlg-title">
        <DialogHead>
          <DialogTitle id="dlg-title">Döşeme Betonarme - 3. BODRUM, D20, 1, Çiftyön kısa, Üstte+altta düz</DialogTitle>
          <button aria-label="Kapat"><Small name="closeDark" size={10} /></button>
        </DialogHead>
        <DialogTabs>
          <DialogTab $on>Döşemeler</DialogTab>
          <DialogTab>Momentler-Donatı Alanları</DialogTab>
          <DialogTab>İlave Donatılar</DialogTab>
        </DialogTabs>
        <Sheet>
          <GridFrame>
            <Grid>
              <colgroup>{columns.map(([n, w]) => <col key={n} width={w} />)}</colgroup>
              <thead>
                <tr>{columns.map(([n]) => <th key={n}>{n}</th>)}</tr>
              </thead>
              <tbody>
                {rows.map((r, i) => (
                  <Row key={i} $on={i === 0}>
                    <td><RowTick type="checkbox" aria-label={r[0]} /></td>
                    {r.map((v, j) => <td key={j}>{v && <a href="#">{v}</a>}</td>)}
                  </Row>
                ))}
              </tbody>
            </Grid>
          </GridFrame>
        </Sheet>
        <Foot>
          <FootCheck $gap={26}><BlueTick type="checkbox" defaultChecked />Yatayları göster</FootCheck>
          <FootCheck $gap={11}><BlueTick type="checkbox" defaultChecked />Dikeyleri göster</FootCheck>
          <FootCheck $gap={14}><BlueTick type="checkbox" />Tüm Katlar</FootCheck>
          <FootButtons>
            <PushButton>Seç</PushButton>
            <PushButton>&lt;&lt;</PushButton>
            <PushButton>&gt;&gt;</PushButton>
            <PushButton>Filtre</PushButton>
            <PushButton $primary>Tamam</PushButton>
            <PushButton>İptal</PushButton>
          </FootButtons>
        </Foot>
      </Dialog>
    </DialogLayer>
  );
}

/* ---------- command log and status ---------- */
const Console = styled.section`
  height: 42px;
  margin: 2px 0 0 17px;
  padding: 1px 0 0 1px;
  background: #f0f0f1;
  color: #1b1b1b;
  line-height: 9px;
`;
const Prompt = styled.label`
  display: flex;
  gap: 3px;
  input {
    flex: 1;
    height: 9px;
    padding: 0;
    border: 0;
    background: none;
    outline: 0;
  }
`;
const StatusBar = styled.div`
  display: flex;
  height: 13px;
  margin-left: 17px;
  background: linear-gradient(#c5c8d0, #a9adb8 50%, #bdc0c9);
  color: #2a2c33;
  line-height: 13px;
`;
const StatusCell = styled.span<{ $w?: number }>`
  flex: ${(p) => (p.$w ? `0 0 ${p.$w}px` : "1")};
  padding-left: 4px;
  border-right: 1px solid #8f929c;
`;

/* ---------- taskbar ---------- */
const TaskBar = styled.footer`
  display: grid;
  grid-template-columns: 1fr 648px 1fr;
  align-items: center;
  height: 31px;
  background: #dcdcdd;
  color: #222;
`;
const Weather = styled.div`
  display: flex;
  align-items: center;
  gap: 4px;
  padding-left: 12px;
  line-height: 10px;
`;
const Center = styled.div`
  display: flex;
  align-items: center;
  gap: 3px;
`;
const Cell = styled.button<{ $on?: boolean; $mark?: "dot" | "bar" }>`
  position: relative;
  display: grid;
  place-items: center;
  flex: 1;
  height: 26px;
  margin: 0 2px;
  padding-bottom: 2px;
  border-radius: 3px;
  background: ${(p) => (p.$on ? "#f2f2f3" : "none")};
  &::after {
    content: "";
    position: absolute;
    left: 50%;
    bottom: 0;
    width: ${(p) => (p.$mark === "bar" ? 10 : 4)}px;
    height: 2px;
    margin-left: ${(p) => (p.$mark === "bar" ? -5 : -2)}px;
    border-radius: 1px;
    background: ${(p) => (p.$mark === "bar" ? "#1a6fc0" : p.$mark ? "#808083" : "none")};
  }
`;
const StartCell = styled.button`
  display: grid;
  place-items: center;
  width: 29px;
  height: 26px;
`;
const TaskSearch = styled.label`
  display: flex;
  align-items: center;
  gap: 6px;
  width: 145px;
  height: 20px;
  padding: 0 4px 0 6px;
  border-radius: 10px;
  background: #f4f4f5;
  input {
    flex: 1;
    min-width: 0;
    padding: 0;
    border: 0;
    background: none;
    font-size: 9px;
    line-height: 12px;
    outline: 0;
  }
  input::placeholder { color: #666; }
`;
const Apps = styled.div`
  display: flex;
  flex: 1;
`;
const Badge = styled.span`
  position: absolute;
  right: 2px;
  top: 1px;
  width: 9px;
  height: 9px;
  border-radius: 50%;
  background: #d63a48;
  color: #fff;
  line-height: 9px;
`;
const Tray = styled.div`
  display: flex;
  align-items: center;
  justify-content: flex-end;
  gap: 4px;
  padding-right: 13px;
`;
const Clock = styled.div`
  width: 45px;
  text-align: right;
  line-height: 10px;
`;
const Doodle = styled.svg`
  width: 28px;
  height: 16px;
  flex: none;
`;

const apps: [string, string, ("dot" | "bar")?][] = [
  ["desk", "Görev görünümü"], ["obs", "OBS", "dot"], ["steam", "Steam"], ["ps", "Photoshop"], ["logi", "G HUB", "dot"],
  ["edge", "Edge"], ["spotify", "Spotify", "dot"], ["folder", "Dosya Gezgini", "dot"], ["outlook", "Outlook"],
  ["discord", "Discord", "dot"], ["chrome", "Chrome", "dot"], ["acad", "AutoCAD", "dot"], ["word", "Word", "dot"],
  ["idecad", "ideCAD", "bar"], ["excel", "Excel", "dot"], ["calculator", "Hesap Makinesi", "dot"],
];

const ribbonTabs = [
  "Çelik", "Birleşim", "Objeler", "Değiştir", "Araçlar", "Ayarlar", "Görüntü",
  "Analiz ve Tasarım", "Analiz ve Tasarım Görüntüleme", "Raporlar", "Çizimler",
];

const quick: [number, string[]][] = [
  [117, ["home", "newDoc", "open", "save", "saveAll", "undo", "redo", "undoBox"]],
  [74, ["tree", "letterA", "perp", "parallel", "corner"]],
  [74, ["gridPts", "sigma", "snap", "axisX", "axisY"]],
  [43, ["dims", "as", "flash"]],
];

const rowA = [
  "zoomWin", "zoomAll", "|", "brush", "pen", "tag", "|", "compass", "arrowL", "|", "move", "moveCopy", "rotate", "anchor", "mirror", "target",
  "|", "trim", "extend", "offset", "bars", "curve", "curve", "box", "|", "dots", "block", "dots", "|", "box", "wedge", "wedge", "|",
  "curve", "ring", "cloudLine", "tip", "dots", "chart", "|", "panels", "panels", "|", "box", "redTick",
];
const rowB = ["globe", "pins", "box", "listBox", "flag", "tilde", "spark", "pen", "spark", "dots", "|", "flash"];

const side = [
  ["listBox"], ["selRed", "selGray", "lock", "pins", "tableSel"], ["help"], ["sheet"],
  ["plumb", "copy", "stack", "send", "multi", "swap", "circleDots"],
  ["slashBox", "door", "hand", "slope", "pipe"], ["cubes"], ["kzty"], ["binoc"],
];

const Items = ({ names }: { names: string[] }) => (
  <>
    {names.map((n, i) => (n === "|" ? <VRule key={i} /> : <button key={i} aria-label={n}><Small name={n} /></button>))}
  </>
);

export default function App() {
  return (
    <Shell>
      <Global />
      <TitleBar>
        <QuickWrap>
          <QuickBar>
            {quick.map(([w, names], i) => (
              <React.Fragment key={i}>
                {i > 1 && <VRule />}
                <QuickGroup $w={w}>
                  {names.map((n) => (
                    <IconButton key={n} aria-label={n} $on={n === "tree" || n === "snap"}><Small name={n} /></IconButton>
                  ))}
                </QuickGroup>
              </React.Fragment>
            ))}
            <CaretButton aria-label="Özelleştir"><Caret /></CaretButton>
          </QuickBar>
          <Caret />
        </QuickWrap>
        <AppTitle>ideCAD Statik - 1194-13 STATİK - analiz 1.ide11trial - Statik - [3. BODRUM]</AppTitle>
        <WindowButtons>
          <IconButton aria-label="Küçült"><Small name="min" size={10} /></IconButton>
          <IconButton aria-label="Geri yükle"><Small name="restore" size={10} /></IconButton>
          <IconButton aria-label="Kapat"><Small name="close" size={10} /></IconButton>
        </WindowButtons>
      </TitleBar>
      <Orb><OrbPrefix>ide</OrbPrefix>CAD</Orb>

      <TabStrip>
        <RibbonTab $on>Betonarme</RibbonTab>
        {ribbonTabs.map((t) => <RibbonTab key={t} $wide={t.endsWith("Görüntüleme")}>{t}</RibbonTab>)}
        <Spacer />
        <SearchBox>
          <Small name="search" size={8} />
          <input placeholder="Herhangi bir komut ara..." aria-label="Komut ara" />
          <Caret />
        </SearchBox>
        <StripTools>
          <Small name="layers" />
          <Small name="layers" />
        </StripTools>
        <StyleBox>
          <Small name="swatch" />
          <select aria-label="Stil"><option>Standart</option></select>
          <Caret />
        </StyleBox>
        <ViewTools>
          <button>Görünüm</button>
          <Caret />
          <Small name="nodes" />
          <VRule />
          <Small name="book" />
          <Caret />
          <Small name="minSm" size={10} />
          <Small name="restoreSm" size={10} />
          <Small name="closeSm" size={10} />
        </ViewTools>
      </TabStrip>

      <Ribbon>
        <Group $w={139}>
          <GroupBody>
            <Tool w={31} icon="gear" a="Analiz" b="Ayarları" />
            <Tool w={27} icon="list" a="Kat" b="listesi" caret />
            <SideList>
              <SideItem><Small name="floors" size={11} />Kat Genel Ayarları</SideItem>
              <SideItem><Small name="copyFloor" size={11} />Kat Kopyala</SideItem>
              <SideCheck><Tick type="checkbox" defaultChecked />Yarı Rijit</SideCheck>
            </SideList>
          </GroupBody>
          <Caption>Proje Ayarları</Caption>
        </Group>
        <Group $w={51}>
          <GroupBody>
            <Tool w={31} icon="axis" a="Aks" caret />
            <Col w={12} names={["arcUp", "arcC", "dash"]} />
          </GroupBody>
          <Caption>Aks</Caption>
        </Group>
        <Group $w={50}>
          <GroupBody>
            <Tool w={31} icon="wall" a="Duvar" caret />
            <Col w={12} names={["wallArc", "poly", "wave"]} />
          </GroupBody>
          <Caption>Duvar</Caption>
        </Group>
        <Group $w={293}>
          <GroupBody>
            <Tool w={31} icon="column" a="Kolon" caret />
            <Col w={12} names={["circle", "blob", "tee"]} />
            <Sep w={12} />
            <Tool w={22} icon="beam" a="Kiriş" caret />
            <Col w={20} names={["angle", "wave", "arcBeam"]} />
            <Sep w={6} />
            <Tool w={30} icon="shear" a="Perde" caret />
            <Tool w={34} icon="slab" a="Döşeme" caret />
            <Col w={16} names={["yellowI", "window", "yellowL"]} />
            <Col w={16} names={["hatch", "hash", "redL"]} />
            <Col w={16} names={["arcTable", "redGrid", "plainL"]} />
            <Tool w={36} icon="slabEdge" a="Döşeme" b="Kenarı" caret />
            <Sep w={2} />
            <Tool w={38} icon="stairs" a="Merdiven" caret />
          </GroupBody>
          <Caption>Betonarme</Caption>
        </Group>
        <Group $w={161}>
          <GroupBody>
            <Tool w={31} icon="strip" a="Sürekli" b="Temel" caret />
            <Col w={12} names={["foot", "piles", "ties"]} />
            <SmallCol $w={10}>
              <CaretCell><Caret /></CaretCell>
              <CaretCell><Caret /></CaretCell>
              <CaretCell><Caret /></CaretCell>
            </SmallCol>
            <Sep w={4} />
            <Col w={16} names={["lShape", "hook"]} />
            <Sep w={6} />
            <Tool w={32} icon="raft" a="Radye" caret />
            <Col w={12} names={["yellowI", "window", "yellowL"]} />
            <Tool w={36} icon="raftEdge" a="Radye" b="Kenarı" caret />
          </GroupBody>
          <Caption>Temel - Zemin</Caption>
        </Group>
        <Group $w={51}>
          <GroupBody><Tool w={49} icon="scaffold" a="İskele" b="Makrosu" caret /></GroupBody>
          <Caption>İskele Ayarları</Caption>
        </Group>
        <Group $w={74}>
          <GroupBody>
            <Tool w={43} icon="calc" a="Betonarme" caret />
            <Tool w={27} icon="calcSteel" a="Çelik" caret />
          </GroupBody>
          <Caption>Tasarım</Caption>
        </Group>
        <Group $w={127}>
          <GroupBody>
            <Tool w={36} icon="reports" a="Seçmeli" b="Raporlar" />
            <Col w={13} names={["rep1", "rep2", "rep3"]} />
            <Sep w={4} />
            <Tool w={42} icon="colReport" a="Betonarme" caret />
            <Tool w={28} icon="steelReport" a="Çelik" caret />
          </GroupBody>
          <Caption>Raporlar</Caption>
        </Group>
        <Group $w={74}>
          <GroupBody>
            <Tool w={43} icon="drawConc" a="Betonarme" caret />
            <Tool w={27} icon="drawSteel" a="Çelik" caret />
          </GroupBody>
          <Caption>Çizim Oluştur</Caption>
        </Group>
        <Group $w={159}>
          <GroupBody>
            <Tool w={31} icon="solid" a="Katı" b="Model" />
            <Tool w={26} icon="model" a="Analiz" b="Modeli" />
            <Sep w={5} />
            <Tool w={28} icon="wallFrame" a="Duvar" caret />
            <Sep w={4} />
            <Tool w={30} icon="modal" a="Modal" caret />
            <Tool w={31} icon="moment" a="Moment" b="3-3" caret />
          </GroupBody>
          <Caption>Analiz ve Tasarım Görüntüleme</Caption>
        </Group>
        <Group $w={39}>
          <GroupBody><Tool w={37} icon="bolt" a="Analiz" b="Tasarım" caret /></GroupBody>
          <Caption>Analiz</Caption>
        </Group>
        <Group />
      </Ribbon>

      <ToolRow>
        <Strip $w={581}><Grip /><Items names={rowA} /></Strip>
        <Strip $w={176} $gap={84}><Grip /><Items names={rowB} /></Strip>
      </ToolRow>

      <Work>
        <SideDock>
          <SideBar>
            {side.map((g, i) => (
              <SideGroup key={i}>
                {g.map((n) => <button key={n} aria-label={n}><Small name={n} /></button>)}
              </SideGroup>
            ))}
          </SideBar>
        </SideDock>
        <Plan><PlanFragment /></Plan>
        <Views>
          <View><Building /><Keys /></View>
          <View><Elevation /><Keys /></View>
        </Views>
      </Work>

      <Console>
        <div>*İptal*</div>
        <div>Komut :</div>
        <div>*İptal*</div>
        <Prompt>Komut :<input aria-label="Komut satırı" /></Prompt>
      </Console>
      <StatusBar>
        <StatusCell $w={171}>BOŞ</StatusCell>
        <StatusCell>Hazır</StatusCell>
        <StatusCell $w={53}>tf / m</StatusCell>
        <StatusCell $w={50}>1 : 100</StatusCell>
        <StatusCell $w={50}>% 123</StatusCell>
      </StatusBar>

      <TaskBar>
        <Weather>
          <Task name="cloud" size={17} />
          <div>
            <div>3°C</div>
            <div>Bulutlu</div>
          </div>
        </Weather>
        <Center>
          <StartCell aria-label="Başlat"><Task name="start" /></StartCell>
          <TaskSearch>
            <Task name="lens" size={12} />
            <input placeholder="Ara" aria-label="Ara" />
            <Doodle viewBox="0 0 28 16">
              <path d="M2 14C0 6 6 1 14 1S28 6 26 14Z" fill="#9bb7d8" />
              <path d="M3 8C7 3 11 4 15 8S23 10 26 6L26 12H2Z" fill="#67b89a" />
              <path d="M10 3C14 1 20 2 23 7L17 10Z" fill="#b58bd6" />
              <path d="M12 9L16 7L20 11L14 13Z" fill="#e2a35a" />
              <path d="M1 15L6 11L11 14L17 10L27 15Z" fill="#122a63" />
            </Doodle>
          </TaskSearch>
          <Apps>
            {apps.map(([n, label, mark]) => (
              <Cell key={n} aria-label={label} $on={mark === "bar"} $mark={mark}>
                <Task name={n} />
                {n === "discord" && <Badge>1</Badge>}
              </Cell>
            ))}
          </Apps>
        </Center>
        <Tray>
          <Task name="up" size={14} />
          <Task name="mic" size={14} />
          <Task name="wifi" size={14} />
          <Task name="sound" size={13} />
          <Task name="battery" size={14} />
          <Clock>
            <div>01:03</div>
            <div>19.01.2026</div>
          </Clock>
        </Tray>
      </TaskBar>

      <SlabDialog />
      <Pointer viewBox="0 0 9 14">
        <path d="M1 1V11L3.500 9L5 13L6.500 12L5 8.500H8Z" fill="#fff" stroke="#333" strokeWidth="0.8" />
      </Pointer>
    </Shell>
  );
}
